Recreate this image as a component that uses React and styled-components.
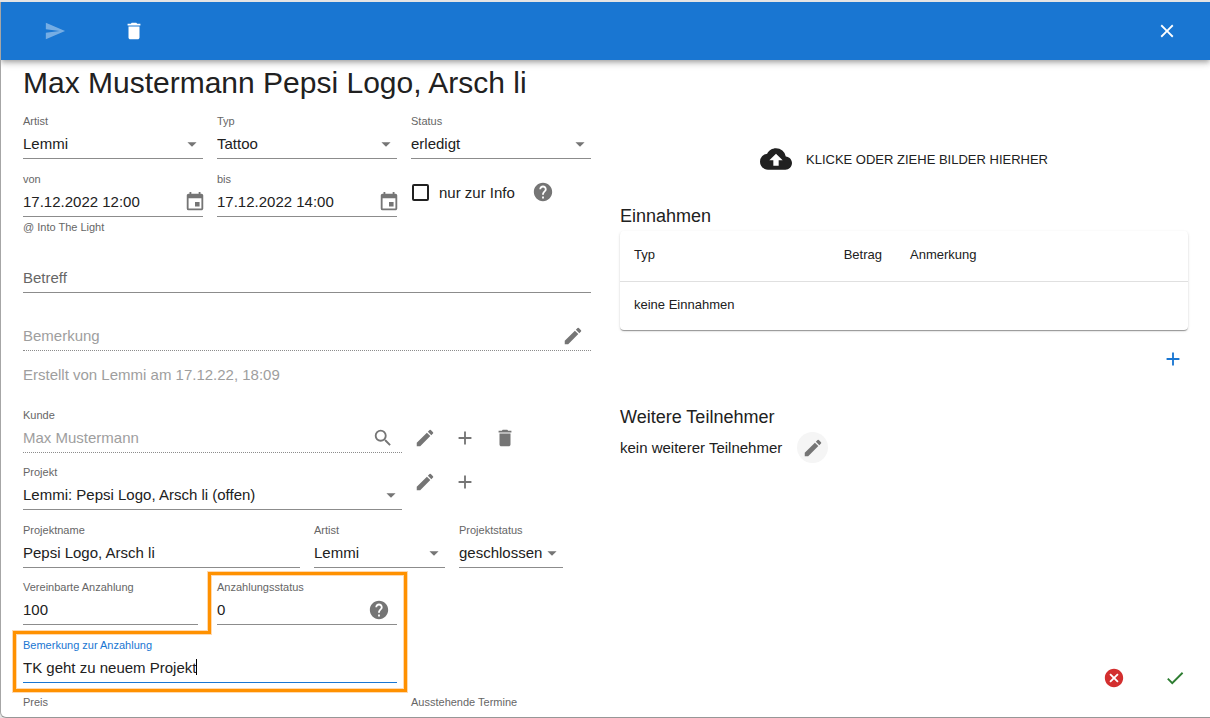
import React from "react";
import styled, { createGlobalStyle } from "styled-components";
import {
  MdSend,
  MdDelete,
  MdClose,
  MdEdit,
  MdAdd,
  MdSearch,
  MdHelp,
  MdCloudUpload,
  MdCancel,
  MdCheck,
  MdArrowDropDown,
  MdInsertInvitation,
} from "react-icons/md";

const GlobalStyle = createGlobalStyle`
  *, *::before, *::after { box-sizing: border-box; }
  body {
    margin: 0;
    background: #e4e4e4;
    color: #212121;
    font-family: "Liberation Sans", Arial, sans-serif;
    font-size: 15px;
  }
  button, input, select { font: inherit; color: inherit; }
`;

const Dialog = styled.div`
  display: flex;
  flex-direction: column;
  height: calc(100vh - 2px);
  margin-top: 2px;
  overflow: hidden;
  background: #fff;
  border-left: 1px solid #a6a6a6;
  border-bottom: 1px solid #979797;
  border-bottom-left-radius: 6px;
`;

const AppBar = styled.header`
  display: flex;
  align-items: center;
  flex: none;
  height: 58px;
  padding: 0 23px 0 22px;
  color: #fff;
  background: #1976d2;
  box-shadow: 0 2px 4px -1px rgba(0, 0, 0, 0.2), 0 4px 5px rgba(0, 0, 0, 0.14),
    0 1px 10px rgba(0, 0, 0, 0.12);
`;

const IconButton = styled.button`
  display: flex;
  align-items: center;
  justify-content: center;
  flex: none;
  width: ${(p) => p.$width || 40}px;
  height: 30px;
  padding: 0;
  border: 0;
  background: none;
  color: ${(p) => p.$color || "#757575"};
  cursor: pointer;
  svg { width: 22px; height: 22px; }
  &:disabled { opacity: 0.4; }
`;

const BarButton = styled(IconButton)`
  width: 64px;
  color: #fff;
  & + & { margin-left: 15px; }
`;

const CloseButton = styled(IconButton)`
  margin-left: auto;
  color: #fff;
`;

const RoundButton = styled(IconButton)`
  width: 31px;
  height: 31px;
  border-radius: 50%;
  background: #f5f5f5;
`;

const Content = styled.main`
  display: flex;
  flex-direction: column;
  flex: 1;
  min-height: 0;
  padding: 5px 22px 0;
`;

const Title = styled.h1`
  margin: 0 0 13px;
  font-size: 30px;
  line-height: 36px;
  font-weight: 400;
`;

const Columns = styled.div`
  display: grid;
  grid-template-columns: 1fr 1fr;
  grid-template-rows: minmax(0, 1fr);
  column-gap: 29px;
  flex: 1;
  min-height: 0;
`;

const Form = styled.form`
  display: flex;
  flex-direction: column;
  gap: 13px;
  min-width: 0;
`;

const Aside = styled.section`
  display: flex;
  flex-direction: column;
  min-width: 0;
  padding-bottom: 24px;
`;

const Pair = styled.div`
  display: flex;
  flex-direction: column;
  gap: 12px;
  margin-top: ${(p) => p.$top || 0}px;
`;

const Thirds = styled.div`
  position: relative;
  display: grid;
  grid-template-columns: repeat(3, 1fr);
  gap: 14px;
`;

const ProjectGrid = styled.div`
  display: grid;
  grid-template-columns: 277fr 131fr 104fr;
  gap: 14px;
  padding-right: 28px;
`;

const ActionRow = styled.div`
  display: grid;
  grid-template-columns: 2fr 1fr;
`;

const Actions = styled.div`
  display: flex;
  align-items: ${(p) => p.$align || "center"};
  padding: 2px 0 0 3px;
`;

const FieldBox = styled.div`
  grid-column: span ${(p) => p.$span || 1};
  min-width: 0;
  padding-right: ${(p) => p.$inset || 0}px;
`;

const Label = styled.label`
  display: block;
  height: 14px;
  font-size: 11px;
  line-height: 14px;
  white-space: nowrap;
  color: ${(p) => (p.$active ? "#1976d2" : "#666")};
`;

const Line = styled.div`
  position: relative;
  display: flex;
  align-items: center;
  height: 31px;
  border-bottom: 1px ${(p) => (p.$dotted ? "dotted" : "solid")}
    ${(p) => (p.$active ? "#1976d2" : "#8c8c8c")};
  & > svg {
    position: absolute;
    right: 0;
    top: 5px;
    width: 22px;
    height: 22px;
    color: #757575;
    pointer-events: none;
  }
`;

const Input = styled.input`
  flex: 1;
  min-width: 0;
  height: 30px;
  padding: 0;
  border: 0;
  outline: 0;
  background: none;
  &:disabled { color: #9e9e9e; }
  &::placeholder { color: #666; opacity: 1; }
  &:disabled::placeholder { color: #9e9e9e; }
`;

const ActiveInput = styled(Input)`
  flex: none;
  field-sizing: content;
  caret-color: transparent;
`;

const Caret = styled.span`
  width: 1px;
  height: 16px;
  background: #000;
`;

const Select = styled.select`
  appearance: none;
  width: 100%;
  height: 30px;
  padding: 0 20px 0 0;
  border: 0;
  outline: 0;
  background: none;
`;

const Adornment = styled(IconButton)`
  width: 22px;
  height: 22px;
  margin-top: 2px;
  margin-right: ${(p) => p.$edge}px;
`;

const Helper = styled.p`
  margin: 2px 0 0;
  font-size: 11px;
  line-height: 16px;
  color: #666;
`;

const CheckLine = styled.div`
  display: flex;
  align-items: center;
  height: 40px;
`;

const CheckLabel = styled.label`
  display: flex;
  align-items: center;
  gap: 10px;
  margin-right: 12px;
  padding-left: 1px;
  white-space: nowrap;
`;

const Checkbox = styled.input`
  appearance: none;
  width: 17px;
  height: 17px;
  margin: 0;
  border: 2px solid #212121;
  border-radius: 2px;
  &:checked { background: #1976d2; }
`;

const Created = styled.p`
  margin: 2px 0 0;
  line-height: 18px;
  color: #9e9e9e;
`;

const Highlight = styled.svg`
  position: absolute;
  left: -12px;
  top: -11px;
  width: 400px;
  height: 126px;
  pointer-events: none;
`;

const UploadArea = styled.button`
  display: flex;
  align-items: center;
  justify-content: center;
  flex: none;
  gap: 14px;
  height: 90px;
  padding: 0;
  border: 0;
  background: none;
  font-size: 13px;
  text-transform: uppercase;
  svg { width: 32px; height: 32px; }
`;

const Heading = styled.h2`
  margin: ${(p) => p.$top || 0}px 0 3px;
  font-size: 18px;
  line-height: 24px;
  font-weight: 400;
`;

const Paper = styled.div`
  border-radius: 4px;
  box-shadow: 0 2px 1px -1px rgba(0, 0, 0, 0.2), 0 1px 1px rgba(0, 0, 0, 0.2),
    0 1px 3px rgba(0, 0, 0, 0.12);
`;

const Table = styled.table`
  width: 100%;
  table-layout: fixed;
  border-collapse: collapse;
  font-size: 13px;
  th, td {
    height: 49px;
    padding: 0 14px 3px;
    text-align: left;
    font-weight: 400;
  }
  th {
    height: 50px;
    border-bottom: 1px solid #e0e0e0;
  }
  th:nth-child(1) { width: 209px; }
  th:nth-child(2) { width: 67px; text-align: right; }
`;

const AddRow = styled.div`
  display: flex;
  justify-content: flex-end;
  margin-top: 14px;
`;

const Participants = styled.div`
  display: flex;
  align-items: center;
  gap: 15px;
`;

const Footer = styled.footer`
  display: flex;
  justify-content: flex-end;
  gap: 29px;
  margin-top: auto;
  margin-right: -3px;
`;

function SelectField({ id, label, value }) {
  return (
    <FieldBox>
      <Label htmlFor={id}>{label}</Label>
      <Line>
        <Select id={id} defaultValue={value}>
          <option>{value}</option>
        </Select>
        <MdArrowDropDown />
      </Line>
    </FieldBox>
  );
}

function TextField({ id, label, value, span, inset, disabled, helper, children }) {
  return (
    <FieldBox $span={span} $inset={inset}>
      <Label htmlFor={id}>{label}</Label>
      <Line $dotted={disabled}>
        <Input id={id} defaultValue={value} disabled={disabled} />
        {children}
      </Line>
      {helper && <Helper>{helper}</Helper>}
    </FieldBox>
  );
}

export default function App() {
  return (
    <>
      <GlobalStyle />
      <Dialog role="dialog" aria-labelledby="title">
        <AppBar>
          <BarButton disabled aria-label="Senden"><MdSend /></BarButton>
          <BarButton aria-label="Löschen"><MdDelete /></BarButton>
          <CloseButton aria-label="Schließen"><MdClose /></CloseButton>
        </AppBar>
        <Content>
          <Title id="title">Max Mustermann Pepsi Logo, Arsch li</Title>
          <Columns>
            <Form>
              <Thirds>
                <SelectField id="artist" label="Artist" value="Lemmi" />
                <SelectField id="typ" label="Typ" value="Tattoo" />
                <SelectField id="status" label="Status" value="erledigt" />
              </Thirds>
              <Thirds>
                <TextField id="von" label="von" value="17.12.2022 12:00" helper="@ Into The Light">
                  <Adornment type="button" $edge={-3} aria-label="Beginn wählen"><MdInsertInvitation /></Adornment>
                </TextField>
                <TextField id="bis" label="bis" value="17.12.2022 14:00">
                  <Adornment type="button" $edge={-3} aria-label="Ende wählen"><MdInsertInvitation /></Adornment>
                </TextField>
                <CheckLine>
                  <CheckLabel>
                    <Checkbox type="checkbox" />
                    nur zur Info
                  </CheckLabel>
                  <IconButton type="button" $width={32} aria-label="Hilfe"><MdHelp /></IconButton>
                </CheckLine>
              </Thirds>
              <FieldBox>
                <Label htmlFor="betreff" />
                <Line>
                  <Input id="betreff" placeholder="Betreff" aria-label="Betreff" />
                </Line>
              </FieldBox>
              <FieldBox>
                <Label htmlFor="bemerkung" />
                <Line $dotted>
                  <Input id="bemerkung" placeholder="Bemerkung" aria-label="Bemerkung" disabled />
                  <Adornment type="button" $edge={7} aria-label="Bemerkung bearbeiten"><MdEdit /></Adornment>
                </Line>
              </FieldBox>
              <Created>Erstellt von Lemmi am 17.12.22, 18:09</Created>
              <Pair $top={11}>
                <ActionRow>
                  <TextField id="kunde" label="Kunde" value="Max Mustermann" disabled>
                    <Adornment type="button" $edge={8} aria-label="Kunde suchen"><MdSearch /></Adornment>
                  </TextField>
                  <Actions $align="flex-end">
                    <IconButton type="button" aria-label="Kunde bearbeiten"><MdEdit /></IconButton>
                    <IconButton type="button" aria-label="Kunde anlegen"><MdAdd /></IconButton>
                    <IconButton type="button" aria-label="Kunde entfernen"><MdDelete /></IconButton>
                  </Actions>
                </ActionRow>
                <ActionRow>
                  <SelectField id="projekt" label="Projekt" value="Lemmi: Pepsi Logo, Arsch li (offen)" />
                  <Actions $align="flex-start">
                    <IconButton type="button" aria-label="Projekt bearbeiten"><MdEdit /></IconButton>
                    <IconButton type="button" aria-label="Projekt anlegen"><MdAdd /></IconButton>
                  </Actions>
                </ActionRow>
              </Pair>
              <Pair>
                <ProjectGrid>
                  <TextField id="projektname" label="Projektname" value="Pepsi Logo, Arsch li" />
                  <SelectField id="projektartist" label="Artist" value="Lemmi" />
                  <SelectField id="projektstatus" label="Projektstatus" value="geschlossen" />
                </ProjectGrid>
                <Thirds>
                  <TextField id="anzahlung" label="Vereinbarte Anzahlung" value="100" inset={5} />
                  <TextField id="anzahlungsstatus" label="Anzahlungsstatus" value="0">
                    <Adornment type="button" $edge={7} aria-label="Hilfe zum Anzahlungsstatus"><MdHelp /></Adornment>
                  </TextField>
                  <Highlight viewBox="0 0 400 126" fill="none" aria-hidden="true">
                    <path d="M198.500 4.500H394.500V121.500H3.500V63.500H198.500Z" stroke="#ffd9b0" strokeWidth="5" />
                    <path d="M198.500 4.500H394.500V121.500H3.500V63.500H198.500Z" stroke="#ff9100" strokeWidth="3" />
                  </Highlight>
                </Thirds>
              </Pair>
              <Pair>
                <Thirds>
                  <FieldBox $span={2}>
                    <Label htmlFor="anzahlungsbemerkung" $active>Bemerkung zur Anzahlung</Label>
                    <Line $active>
                      <ActiveInput id="anzahlungsbemerkung" defaultValue="TK geht zu neuem Projekt" />
                      <Caret />
                    </Line>
                  </FieldBox>
                </Thirds>
                <Thirds>
                  <TextField id="preis" label="Preis" span={2} />
                  <TextField id="termine" label="Ausstehende Termine" />
                </Thirds>
              </Pair>
            </Form>
            <Aside>
              <UploadArea type="button">
                <MdCloudUpload />
                Klicke oder ziehe Bilder hierher
              </UploadArea>
              <Heading>Einnahmen</Heading>
              <Paper>
                <Table>
                  <thead>
                    <tr>
                      <th scope="col">Typ</th>
                      <th scope="col">Betrag</th>
                      <th scope="col">Anmerkung</th>
                    </tr>
                  </thead>
                  <tbody>
                    <tr>
                      <td colSpan={3}>keine Einnahmen</td>
                    </tr>
                  </tbody>
                </Table>
              </Paper>
              <AddRow>
                <IconButton type="button" $width={30} $color="#1976d2" aria-label="Einnahme hinzufügen"><MdAdd /></IconButton>
              </AddRow>
              <Heading $top={31}>Weitere Teilnehmer</Heading>
              <Participants>
                kein weiterer Teilnehmer
                <RoundButton type="button" aria-label="Teilnehmer bearbeiten"><MdEdit /></RoundButton>
              </Participants>
              <Footer>
                <IconButton type="button" $width={32} $color="#d32f2f" aria-label="Abbrechen"><MdCancel /></IconButton>
                <IconButton type="button" $width={32} $color="#2e7d32" aria-label="Speichern"><MdCheck /></IconButton>
              </Footer>
            </Aside>
          </Columns>
        </Content>
      </Dialog>
    </>
  );
}
